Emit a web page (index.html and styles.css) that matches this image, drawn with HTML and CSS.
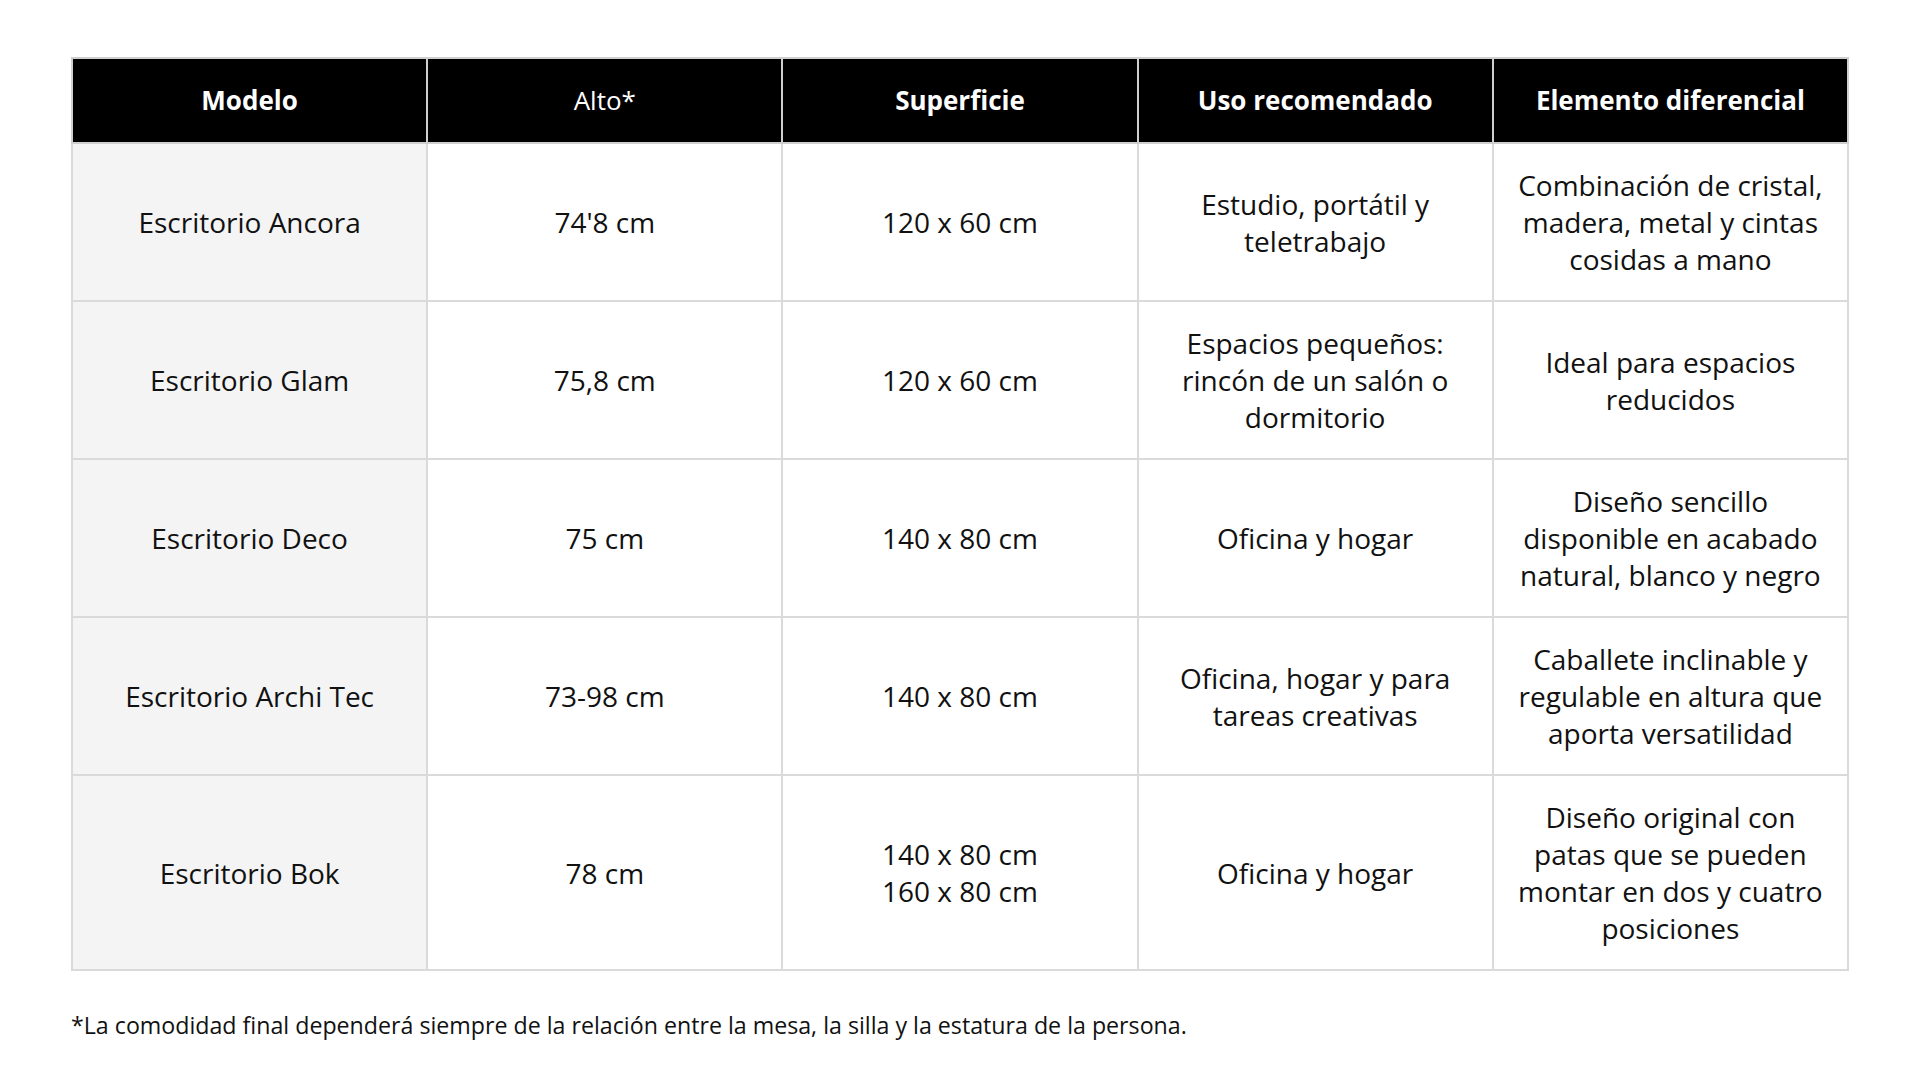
FILE: index.html
```html
<!DOCTYPE html>
<html lang="es">
<head>
<meta charset="utf-8">
<title>Comparativa de escritorios</title>
<link rel="stylesheet" href="styles.css">
</head>
<body>
<main class="page">
  <table class="compare">
    <thead>
      <tr>
        <th>Modelo</th>
        <th class="light">Alto*</th>
        <th>Superficie</th>
        <th>Uso recomendado</th>
        <th>Elemento diferencial</th>
      </tr>
    </thead>
    <tbody>
      <tr>
        <td class="model">Escritorio Ancora</td>
        <td>74'8 cm</td>
        <td>120 x 60 cm</td>
        <td>Estudio, portátil y<br>teletrabajo</td>
        <td>Combinación de cristal,<br>madera, metal y cintas<br>cosidas a mano</td>
      </tr>
      <tr>
        <td class="model">Escritorio Glam</td>
        <td>75,8 cm</td>
        <td>120 x 60 cm</td>
        <td>Espacios pequeños:<br>rincón de un salón o<br>dormitorio</td>
        <td>Ideal para espacios<br>reducidos</td>
      </tr>
      <tr>
        <td class="model">Escritorio Deco</td>
        <td>75 cm</td>
        <td>140 x 80 cm</td>
        <td>Oficina y hogar</td>
        <td>Diseño sencillo<br>disponible en acabado<br>natural, blanco y negro</td>
      </tr>
      <tr>
        <td class="model">Escritorio Archi Tec</td>
        <td>73-98 cm</td>
        <td>140 x 80 cm</td>
        <td>Oficina, hogar y para<br>tareas creativas</td>
        <td>Caballete inclinable y<br>regulable en altura que<br>aporta versatilidad</td>
      </tr>
      <tr>
        <td class="model">Escritorio Bok</td>
        <td>78 cm</td>
        <td>140 x 80 cm<br>160 x 80 cm</td>
        <td>Oficina y hogar</td>
        <td>Diseño original con<br>patas que se pueden<br>montar en dos y cuatro<br>posiciones</td>
      </tr>
    </tbody>
  </table>
  <p class="note">*La comodidad final dependerá siempre de la relación entre la mesa, la silla y la estatura de la persona.</p>
</main>
</body>
</html>
```
FILE: styles.css
```css
html, body {
  margin: 0;
  padding: 0;
  background: #ffffff;
}

body {
  font-family: "Open Sans", "Noto Sans", "Liberation Sans", sans-serif;
  color: #111111;
}

.page {
  padding: 57px 71px 0 71px;
}

.compare {
  width: 1778px;
  border-collapse: collapse;
  table-layout: fixed;
}

.compare th,
.compare td {
  border: 2px solid #dadada;
  text-align: center;
  vertical-align: middle;
  line-height: 37px;
  padding: 23px 12px 22px 12px;
}

.compare th {
  background: #000000;
  color: #ffffff;
  font-size: 26px;
  font-weight: 700;
  border-color: #cfcfcf;
  padding: 23px 12px 23px 12px;
}

.compare th.light {
  font-weight: 400;
}

.compare td {
  font-size: 28px;
  font-weight: 400;
  color: #111111;
  background: #ffffff;
}

.compare td.model {
  background: #f4f4f4;
}

.note {
  margin: 39px 0 0 0;
  font-size: 23.2px;
  line-height: 30px;
  color: #111111;
}
```
